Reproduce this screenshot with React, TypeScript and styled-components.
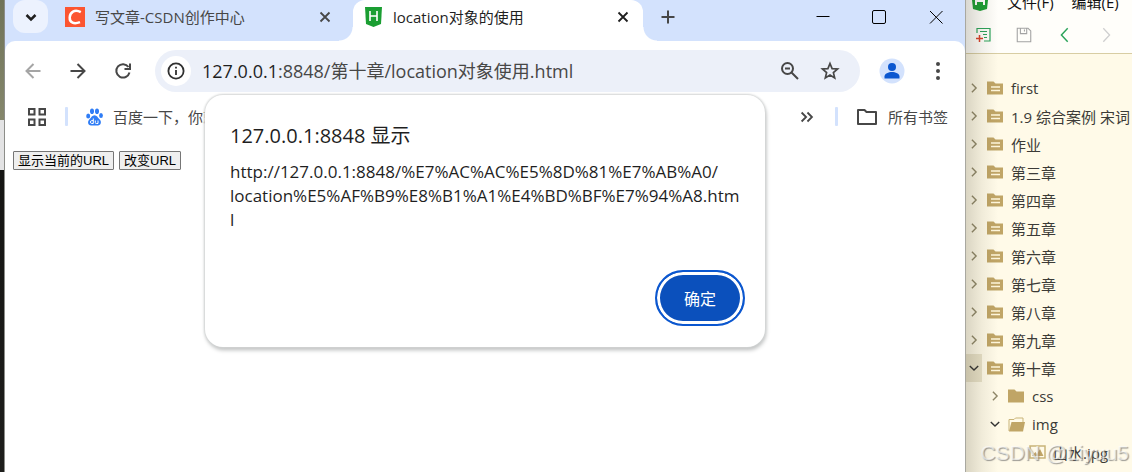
import React from 'react';
import styled, { createGlobalStyle } from 'styled-components';

const ui = '"Open Sans", "Noto Sans CJK SC", sans-serif';

const Global = createGlobalStyle`
  * { box-sizing: border-box; }
  body { margin: 0; background: #fff; font-family: ${ui}; overflow: hidden; }
  button, input { font-family: inherit; margin: 0; }
  svg { display: block; flex: none; }
  h1, h2, p, ul { margin: 0; padding: 0; font-weight: 400; }
`;

const Desktop = styled.div`
  display: flex;
  height: 100vh;
  overflow: hidden;
`;

const Backdrop = styled.div`
  flex: none;
  width: 5px;
  border-right: 1px solid #8c8d89;
  background: linear-gradient(#6f7358 0, #85876c 120px, #e3e3e4 120px, #e3e3e4 170px, #151513 170px, #1e1e1c 100%);
`;

const Browser = styled.section`
  position: relative;
  flex: 1;
  min-width: 0;
  background: #d3e2fd;
`;

const TabStrip = styled.div`
  display: flex;
  height: 41px;
  padding-left: 8px;
`;

const GhostButton = styled.button<{ $w?: number; $h?: number }>`
  display: flex;
  flex: none;
  align-items: center;
  justify-content: center;
  width: ${p => p.$w ?? 32}px;
  height: ${p => p.$h ?? 32}px;
  padding: 0;
  border: 0;
  background: transparent;
  color: #474747;
`;

const TabSearch = styled(GhostButton)`
  height: 33px;
  border-radius: 12px;
  background: #ecf2fe;
  color: #1f1f1f;
`;

const Tab = styled.div<{ $active?: boolean }>`
  position: relative;
  display: flex;
  align-items: center;
  width: ${p => (p.$active ? 290 : 305)}px;
  height: ${p => (p.$active ? 41 : 33)}px;
  padding: ${p => (p.$active ? '0 8px 8px 11px' : '0 16px 0 17px')};
  border-radius: 12px 12px 0 0;
  background: ${p => (p.$active ? '#fff' : 'transparent')};
  color: ${p => (p.$active ? '#1f1f1f' : '#474747')};
  &::before, &::after {
    content: ${p => (p.$active ? '""' : 'none')};
    position: absolute;
    bottom: 0;
    width: 14px;
    height: 14px;
  }
  &::before { right: 100%; background: radial-gradient(circle at 0 0, transparent 13px, #fff 14px); }
  &::after { left: 100%; background: radial-gradient(circle at 100% 0, transparent 13px, #fff 14px); }
`;

const TabTitle = styled.span`
  flex: 1;
  margin-left: 10px;
  font-size: 15px;
  line-height: 20px;
  white-space: nowrap;
`;

const WindowControls = styled.div`
  display: flex;
  margin-left: auto;
`;

const Sheet = styled.div`
  height: calc(100% - 41px);
  border-radius: 10px 10px 0 0;
  background: #fff;
`;

const Toolbar = styled.div`
  display: flex;
  align-items: center;
  height: 59px;
  padding: 0 14px 0 12px;
`;

const NavGroup = styled.div`
  display: flex;
  gap: 13px;
  margin-right: 16px;
`;

const AddressBar = styled.div`
  display: flex;
  flex: 1;
  align-items: center;
  height: 42px;
  padding: 0 6px;
  border-radius: 21px;
  background: #ecf0f9;
`;

const SiteInfo = styled(GhostButton)`
  width: 30px;
  height: 30px;
  border-radius: 50%;
  background: #fff;
`;

const Address = styled.div`
  flex: 1;
  min-width: 0;
  margin-left: 11px;
  color: #474747;
  font-size: 18px;
  line-height: 24px;
  white-space: nowrap;
  b { color: #1f1f1f; font-weight: 400; }
`;

const Bookmarks = styled.div`
  display: flex;
  align-items: center;
  height: 33px;
  padding: 0 17px 0 21px;
  color: #474747;
`;

const Divider = styled.span<{ $gap?: number }>`
  width: 3px;
  height: 19px;
  margin-left: ${p => p.$gap ?? 0}px;
  border-radius: 1px;
  background: #d3e2fd;
`;

const Bookmark = styled.a`
  display: flex;
  align-items: center;
  gap: 10px;
  margin-left: 18px;
  color: inherit;
  font-size: 15px;
  line-height: 20px;
  text-decoration: none;
  white-space: nowrap;
`;

const Page = styled.main`
  display: flex;
  gap: 5px;
  padding: 18px 8px;
`;

const PageButton = styled.button`
  height: 19px;
  padding: 0 4px;
  border: 1px solid #767676;
  border-radius: 1px;
  background: #efefef;
  color: #000;
  font: 13px/15px "Liberation Sans", "Noto Sans CJK SC", sans-serif;
  white-space: nowrap;
`;

const Dialog = styled.div`
  position: absolute;
  top: 95px;
  left: 0;
  right: 0;
  width: 560px;
  margin: 0 auto;
  padding: 26px 20px 21px 25px;
  border-radius: 18px;
  background: #fff;
  box-shadow: 0 0 2px 1px #d4d6d6, 1px 3px 4px #b9bbbb;
  color: #1f1f1f;
`;

const DialogTitle = styled.h2`
  font-size: 20px;
  line-height: 30px;
`;

const DialogText = styled.p`
  margin-top: 9px;
  font-size: 17px;
  line-height: 24px;
  white-space: nowrap;
  span { display: block; }
`;

const Actions = styled.div`
  display: flex;
  justify-content: flex-end;
  margin-top: 38px;
`;

const Confirm = styled.button`
  width: 90px;
  height: 56px;
  padding: 0;
  border: 2px solid #0b57d0;
  border-radius: 28px;
  background: #0b50bc;
  box-shadow: inset 0 0 0 3px #fff;
  color: #fff;
  font-size: 16px;
`;

const Ide = styled.aside`
  position: relative;
  display: flex;
  flex: none;
  flex-direction: column;
  width: 167px;
  overflow: hidden;
  background: #fffae8;
  color: #3c3b37;
  white-space: nowrap;
  &::before {
    content: "";
    position: absolute;
    inset: 0 auto 0 0;
    width: 32px;
    border-left: 1px solid #a9a8a0;
    background: linear-gradient(90deg, rgba(70, 65, 45, 0.2), rgba(70, 65, 45, 0.08) 50%, transparent);
    pointer-events: none;
  }
`;

const IdeHead = styled.header`
  height: 54px;
  border-bottom: 1px solid #d8cda3;
  background: #fffefa;
`;

const MenuBar = styled.div`
  display: flex;
  align-items: flex-start;
  height: 19px;
  padding-left: 6px;
`;

const MenuItem = styled.button`
  height: 4px;
  margin-left: 18px;
  padding: 0;
  border: 0;
  background: transparent;
  color: #111;
  font-size: 15px;
  line-height: 4px;
`;

const IdeTools = styled.div`
  display: flex;
  gap: 9px;
  padding: 0 2px;
`;

const Tree = styled.ul`
  padding-top: 20px;
  list-style: none;
`;

const TreeRow = styled.li<{ $depth: number }>`
  display: flex;
  align-items: center;
  height: 28px;
  padding-left: ${p => p.$depth * 21}px;
  font-size: 15px;
`;

const Twisty = styled.span<{ $selected?: boolean }>`
  display: flex;
  flex: none;
  align-items: center;
  justify-content: center;
  width: 17px;
  height: 28px;
  margin-right: 5px;
  background: ${p => (p.$selected ? '#e9e2c8' : 'transparent')};
`;

const TreeLabel = styled.span`
  margin-left: 7px;
`;

const Watermark = styled.div`
  position: absolute;
  right: 3px;
  bottom: 5px;
  color: rgba(255, 255, 255, 0.6);
  font: 21px/28px "Liberation Sans", sans-serif;
  text-shadow: 1px 1px 1px rgba(100, 100, 100, 0.65);
`;

type StrokeProps = { size?: number; w?: number; color?: string; d: string };
const Stroke = ({ size = 20, w = 2, color = 'currentColor', d }: StrokeProps) => (
  <svg width={size} height={size} viewBox="0 0 20 20" fill="none" stroke={color} strokeWidth={w}>
    <path d={d} />
  </svg>
);

const HLogo = () => (
  <svg width="19" height="20" viewBox="0 0 19 20">
    <path d="M1 0h17l-1 17-7.500 3L2 17z" fill="#1a9e32" />
    <path d="M6 4v10M13 4v10M6 9h7" stroke="#fff" strokeWidth="1.600" fill="none" />
  </svg>
);

const CsdnLogo = () => (
  <svg width="20" height="20" viewBox="0 0 20 20">
    <path d="M0 0h20v20H0z" fill="#fc5531" />
    <path d="M15.800 5.200C9.500 1.800 5 5.500 4.700 10.500c-.2 5.200 4.300 7 10.300 4.600" fill="none" stroke="#fff" strokeWidth="2.500" />
  </svg>
);

const Paw = () => (
  <svg width="17" height="18" viewBox="0 0 17 18" fill="#2f7df6">
    <ellipse cx="2.200" cy="8" rx="2" ry="2.600" />
    <ellipse cx="6" cy="3.200" rx="2" ry="2.800" />
    <ellipse cx="11" cy="3.200" rx="2" ry="2.800" />
    <ellipse cx="15" cy="7.500" rx="1.900" ry="2.500" />
    <path d="M8.500 7.300c2.400 0 3.200 2.300 5 4 2.600 2.600 1.300 6.200-1.500 6.200H5c-3 0-4-3.700-1.500-6.200 1.800-1.700 2.600-4 5-4z" />
    <path d="M7.300 10.500v5H5.700c-1.700 0-1.700-2.900 0-2.900h1.600M9.300 12.500v2q0 1 1 1h1.700v-3" fill="none" stroke="#fff" />
  </svg>
);

const Folder = ({ kind }: { kind: string }) => {
  if (kind === 'open') {
    return (
      <svg width="17" height="15" viewBox="0 0 17 15">
        <path d="M1 14V2.500h5L7.500 1H15v4" fill="none" stroke="#c9b478" />
        <path d="M3.500 5H17l-2 9.500H1z" fill="#c0a566" />
      </svg>
    );
  }
  if (kind === 'image') {
    return (
      <svg width="17" height="14" viewBox="0 0 17 14">
        <path d="M1 1h15v12H1z" fill="none" stroke="#c9b478" strokeWidth="1.500" />
        <path d="M3 11l3.500-4L8 9l3-5 3.500 7z" fill="#c0a566" />
      </svg>
    );
  }
  return (
    <svg width="17" height="14" viewBox="0 0 17 14">
      <path d="M0 .5h6.500l2 2H16v11H0z" fill="#c0a566" />
      {kind === 'project' && <path d="M4 6h9M4 9.500h9" stroke="#fff7dc" strokeWidth="1.500" />}
    </svg>
  );
};

const nodes: { name: string; depth: number; kind: string; open?: boolean; leaf?: boolean }[] = [
  ...['first', '1.9 综合案例 宋词', '作业', '第三章', '第四章', '第五章', '第六章', '第七章', '第八章', '第九章'].map(name => ({
    name, depth: 0, kind: 'project',
  })),
  { name: '第十章', depth: 0, kind: 'project', open: true },
  { name: 'css', depth: 1, kind: 'closed' },
  { name: 'img', depth: 1, kind: 'open', open: true },
  { name: '山水.jpg', depth: 2, kind: 'image', leaf: true },
];

const closePath = 'M5 5l10 10M15 5L5 15';

export default function App() {
  return (
    <Desktop>
      <Global />
      <Backdrop />
      <Browser>
        <TabStrip>
          <TabSearch $w={35} aria-label="搜索标签页"><Stroke w={2.5} d="M5.500 8l4.500 4.500L14.500 8" /></TabSearch>
          <Tab>
            <CsdnLogo />
            <TabTitle>写文章-CSDN创作中心</TabTitle>
            <GhostButton $w={24} $h={24} aria-label="关闭"><Stroke size={18} d={closePath} /></GhostButton>
          </Tab>
          <Tab $active>
            <HLogo />
            <TabTitle>location对象的使用</TabTitle>
            <GhostButton $w={24} $h={24} aria-label="关闭"><Stroke size={18} color="#1f1f1f" d={closePath} /></GhostButton>
          </Tab>
          <GhostButton $w={50} $h={33} aria-label="新标签页"><Stroke d="M10 3.500v13M3.500 10h13" /></GhostButton>
          <WindowControls>
            <GhostButton $w={56} $h={33} aria-label="最小化"><Stroke w={1} color="#000" d="M3.500 9.500h13" /></GhostButton>
            <GhostButton $w={56} $h={33} aria-label="最大化"><Stroke w={1} color="#000" d="M5 3.500h10q1.500 0 1.500 1.500v10q0 1.500-1.500 1.500H5q-1.500 0-1.500-1.500V5Q3.500 3.500 5 3.500z" /></GhostButton>
            <GhostButton $w={58} $h={33} aria-label="关闭窗口"><Stroke w={1} color="#000" d="M4 4l12.500 12.500M16.500 4L4 16.500" /></GhostButton>
          </WindowControls>
        </TabStrip>
        <Sheet>
          <Toolbar>
            <NavGroup>
              <GhostButton aria-label="后退"><Stroke color="#a5a5a5" d="M17.500 10h-14M10.500 3L3.500 10l7 7" /></GhostButton>
              <GhostButton aria-label="前进"><Stroke d="M2.500 10h14M9.500 3l7 7-7 7" /></GhostButton>
              <GhostButton aria-label="重新加载"><Stroke d="M16.500 11.500A6.700 6.700 0 1 1 15.500 6M17 2.500V8h-5.500" /></GhostButton>
            </NavGroup>
            <AddressBar>
              <SiteInfo aria-label="网站信息">
                <svg width="18" height="18" viewBox="0 0 18 18" fill="none" stroke="#303030" strokeWidth="1.800">
                  <circle cx="9" cy="9" r="7.600" /><path d="M9 8v5M9 4.800v1.800" />
                </svg>
              </SiteInfo>
              <Address><b>127.0.0.1</b>:8848/第十章/location对象使用.html</Address>
              <GhostButton aria-label="缩放">
                <svg width="20" height="20" viewBox="0 0 20 20" fill="none" stroke="currentColor" strokeWidth="2">
                  <circle cx="7.500" cy="7.500" r="5.500" /><path d="M11.500 11.500l6.500 6.500M5 7.500h5" />
                </svg>
              </GhostButton>
              <GhostButton $w={48} aria-label="添加书签">
                <Stroke w={1.7} d="M10 2.500l2.100 5.100 5.500.4-4.200 3.600 1.300 5.400L10 14.100 5.300 17l1.300-5.400L2.400 8l5.500-.4z" />
              </GhostButton>
            </AddressBar>
            <GhostButton $w={64} aria-label="个人资料">
              <svg width="26" height="26" viewBox="0 0 26 26">
                <circle cx="13" cy="13" r="12.500" fill="#d3e2fd" />
                <circle cx="13" cy="9" r="4" fill="#0b57d0" />
                <path d="M5.500 20.500v-2c0-3 4-4.500 7.500-4.500s7.500 1.500 7.500 4.500v2z" fill="#0b57d0" />
              </svg>
            </GhostButton>
            <GhostButton $w={27} aria-label="菜单">
              <svg width="20" height="20" viewBox="0 0 20 20" fill="#474747">
                <circle cx="10" cy="3" r="2" /><circle cx="10" cy="10" r="2" /><circle cx="10" cy="17" r="2" />
              </svg>
            </GhostButton>
          </Toolbar>
          <Bookmarks>
            <GhostButton $w={22} aria-label="应用">
              <svg width="20" height="20" viewBox="0 0 20 20" fill="none" stroke="currentColor" strokeWidth="2">
                <path d="M2 2h5.500v5.500H2zM12.500 2H18v5.500h-5.500zM2 12.500h5.500V18H2zM12.500 12.500H18V18h-5.500z" />
              </svg>
            </GhostButton>
            <Divider $gap={17} />
            <Bookmark href="#baidu"><Paw />百度一下，你就知道</Bookmark>
            <WindowControls>
              <GhostButton $w={56} aria-label="更多书签"><Stroke size={18} d="M4 5l5 5-5 5M10.500 5l5 5-5 5" /></GhostButton>
            </WindowControls>
            <Divider />
            <Bookmark href="#all">
              <svg width="22" height="18" viewBox="0 0 22 18" fill="none" stroke="#474747" strokeWidth="2">
                <path d="M2 2h6.500l2 2H20v12H2z" strokeLinejoin="round" />
              </svg>
              所有书签
            </Bookmark>
          </Bookmarks>
          <Page>
            <PageButton>显示当前的URL</PageButton>
            <PageButton>改变URL</PageButton>
          </Page>
        </Sheet>
        <Dialog role="dialog" aria-labelledby="alert-title">
          <DialogTitle id="alert-title">127.0.0.1:8848 显示</DialogTitle>
          <DialogText>
            <span>http://127.0.0.1:8848/%E7%AC%AC%E5%8D%81%E7%AB%A0/</span>
            <span>location%E5%AF%B9%E8%B1%A1%E4%BD%BF%E7%94%A8.htm</span>
            <span>l</span>
          </DialogText>
          <Actions><Confirm>确定</Confirm></Actions>
        </Dialog>
      </Browser>
      <Ide>
        <IdeHead>
          <MenuBar>
            <svg width="18" height="11" viewBox="0 0 18 11">
              <path d="M1 0h16l-1 9-7 2-7-2z" fill="#1a9e32" />
              <path d="M5 0v5M13 0v5M5 1h8" stroke="#fff" strokeWidth="2" />
            </svg>
            <MenuItem>文件(F)</MenuItem>
            <MenuItem>编辑(E)</MenuItem>
          </MenuBar>
          <IdeTools>
            <GhostButton aria-label="新建">
              <svg width="16" height="16" viewBox="0 0 16 16" fill="none" stroke="#2ba35a" strokeWidth="1.200">
                <path d="M2 6V1.500h13v12.500H9M5 4.500h7M8 7.500h4M9 10.500h3" />
                <path d="M4.500 8v7M1 11.500h7" stroke="#d8402a" strokeWidth="1.500" />
              </svg>
            </GhostButton>
            <GhostButton aria-label="保存"><Stroke size={18} w={1.2} color="#a3a3a3" d="M2.500 2.500h12l3 3v12h-15zM6 2.500v6h7v-6M10.500 4v2" /></GhostButton>
            <GhostButton aria-label="后退"><Stroke size={18} w={1.6} color="#2ba35a" d="M13 2.500L6 10l7 7.500" /></GhostButton>
            <GhostButton aria-label="前进"><Stroke size={18} w={1.4} color="#cfcfcf" d="M7 2.500l7 7.500-7 7.500" /></GhostButton>
          </IdeTools>
        </IdeHead>
        <Tree>
          {nodes.map(n => (
            <TreeRow key={n.name} $depth={n.depth}>
              <Twisty $selected={n.open && n.depth === 0}>
                {!n.leaf && <Stroke size={14} w={2} color={n.open ? '#333' : '#8f8768'} d={n.open ? 'M4 7l6 6 6-6' : 'M7 4l6 6-6 6'} />}
              </Twisty>
              <Folder kind={n.kind} />
              <TreeLabel>{n.name}</TreeLabel>
            </TreeRow>
          ))}
        </Tree>
        <Watermark>CSDN @Liyuu5</Watermark>
      </Ide>
    </Desktop>
  );
}
